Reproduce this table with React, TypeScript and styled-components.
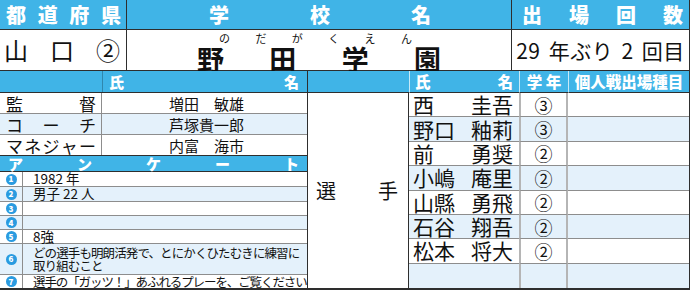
import React from "react";
import styled, { createGlobalStyle } from "styled-components";

const BLUE = "#40b4e7";
const PALE = "#e4f1fb";
const LINE = "#2e2e2e";
const SOFT = "#8d8d8d";

const GlobalStyle = createGlobalStyle`
  body {
    margin: 0;
    background: #fff;
    color: #111;
    font-family: "Noto Sans CJK JP", "Noto Sans", sans-serif;
  }
`;

const Board = styled.div`
  width: 690px;
  height: 290px;
  box-sizing: border-box;
  display: flex;
  flex-direction: column;
  border-bottom: 2px solid ${LINE};
  border-right: 1px solid ${LINE};
  overflow: hidden;
  line-height: 1;
`;

// top: prefecture / school / appearances
const TopGrid = styled.div`
  display: grid;
  grid-template-columns: 126px 385px 1fr;
  grid-template-rows: 30px 41px;
  flex: none;
`;

type PadProps = { $l?: number; $r?: number };

const HeadCell = styled.div<PadProps & { $first?: boolean }>`
  background: ${BLUE};
  color: #fff;
  font-weight: 900;
  font-size: 20px;
  display: flex;
  align-items: center;
  justify-content: space-between;
  padding: 0 ${(p) => p.$r ?? 6}px 0 ${(p) => p.$l ?? 6}px;
  border-left: ${(p) => (p.$first ? "none" : `1px solid ${LINE}`)};
  border-bottom: 1px solid ${LINE};
`;

const ValueCell = styled.div<PadProps & { $first?: boolean }>`
  background: #fff;
  display: flex;
  align-items: center;
  justify-content: space-between;
  padding: 0 ${(p) => p.$r ?? 6}px 0 ${(p) => p.$l ?? 6}px;
  border-left: ${(p) => (p.$first ? "none" : `1px solid ${LINE}`)};
  border-bottom: 1px solid ${LINE};
  font-size: 24px;
`;

const SchoolCell = styled.div`
  border-left: 1px solid ${LINE};
  border-bottom: 1px solid ${LINE};
  display: flex;
  flex-direction: column;
`;

const Furigana = styled.div`
  display: flex;
  justify-content: space-between;
  padding: 3px 99px 0 92px;
  font-size: 11px;
  height: 12px;
`;

const SchoolName = styled.div`
  display: flex;
  justify-content: space-between;
  padding: 1px 70px 0 70px;
  font-size: 27px;
  font-weight: 700;
`;

const Appear = styled.div`
  border-left: 1px solid ${LINE};
  border-bottom: 1px solid ${LINE};
  display: flex;
  align-items: center;
  justify-content: center;
  font-size: 21px;
  letter-spacing: 0.5px;
  word-spacing: 3px;
`;

// lower part
const Lower = styled.div`
  flex: 1;
  display: flex;
  min-height: 0;
`;

const LeftPanel = styled.div`
  width: 307px;
  flex: none;
  display: flex;
  flex-direction: column;
  border-right: 1px solid ${LINE};
`;

const StaffHead = styled.div`
  height: 22px;
  flex: none;
  display: grid;
  grid-template-columns: 102px 1fr;
  background: ${BLUE};
  color: #fff;
  font-weight: 900;
  font-size: 15px;
  border-bottom: 1px solid ${LINE};
  box-sizing: border-box;
`;

const HeadSplit = styled.div<PadProps & { $line?: boolean }>`
  display: flex;
  align-items: center;
  justify-content: space-between;
  padding: 0 ${(p) => p.$r ?? 8}px 0 ${(p) => p.$l ?? 8}px;
  border-left: ${(p) => (p.$line ? "1px solid rgba(0,0,0,0.25)" : "none")};
`;

const StaffRow = styled.div<{ $alt?: boolean }>`
  height: 21px;
  flex: none;
  display: grid;
  grid-template-columns: 102px 1fr;
  background: ${(p) => (p.$alt ? PALE : "#fff")};
  border-bottom: 1px solid ${SOFT};
  box-sizing: border-box;
  &:nth-child(4) {
    border-bottom-color: ${LINE};
  }
`;

const StaffLabel = styled.div`
  display: flex;
  align-items: center;
  justify-content: space-between;
  padding: 0 5px 0 6px;
  font-size: 17px;
  border-right: 1px solid ${SOFT};
`;

const StaffName = styled.div`
  display: flex;
  align-items: center;
  justify-content: center;
  font-size: 15px;
  padding-left: 4px;
`;

const SurveyHead = styled.div`
  height: 16px;
  flex: none;
  background: ${BLUE};
  color: #fff;
  font-weight: 900;
  font-size: 15px;
  display: flex;
  align-items: center;
  justify-content: space-between;
  padding: 0 8px 0 8px;
  border-bottom: 1px solid ${LINE};
  box-sizing: border-box;
`;

const SurveyRow = styled.div<{ $alt?: boolean; $h: number }>`
  height: ${(p) => p.$h}px;
  flex: none;
  display: grid;
  grid-template-columns: 23px 1fr;
  background: ${(p) => (p.$alt ? PALE : "#fff")};
  border-bottom: 1px solid ${SOFT};
  box-sizing: border-box;
  &:last-child {
    border-bottom: none;
    flex: 1 1 auto;
    min-height: 0;
  }
`;

const NumCell = styled.div`
  display: flex;
  align-items: center;
  justify-content: center;
  border-right: 1px solid ${SOFT};
`;

const Badge = styled.span`
  width: 11px;
  height: 11px;
  border-radius: 50%;
  background: #2a9be0;
  color: #fff;
  font-size: 8px;
  font-weight: 900;
  display: flex;
  align-items: center;
  justify-content: center;
`;

const Answer = styled.div<{ $squeeze: number; $size: number }>`
  display: flex;
  align-items: center;
  padding-left: 10px;
  font-size: ${(p) => p.$size}px;
  line-height: 13.5px;
  letter-spacing: ${(p) => p.$squeeze}px;
  white-space: pre-line;
`;

const RightPanel = styled.div`
  flex: 1;
  display: grid;
  grid-template-columns: 101px 110px 49px 1fr;
  grid-template-rows: 22px repeat(8, minmax(0, 1fr));
  min-height: 0;
`;

const RHead = styled.div<PadProps & { $line?: boolean; $center?: boolean }>`
  background: ${BLUE};
  color: #fff;
  font-weight: 900;
  font-size: 15.5px;
  display: flex;
  align-items: center;
  justify-content: ${(p) => (p.$center ? "center" : "space-between")};
  padding: 0 ${(p) => p.$r ?? 0}px 0 ${(p) => p.$l ?? 0}px;
  border-left: ${(p) => (p.$line ? "1px solid rgba(255,255,255,0.7)" : "none")};
  border-bottom: 1px solid ${LINE};
  white-space: nowrap;
`;

const PlayersLabel = styled.div`
  grid-row: 2 / span 8;
  grid-column: 1;
  display: flex;
  align-items: center;
  justify-content: space-between;
  padding: 0 10px 0 8px;
  font-size: 20px;
  border-right: 1px solid ${LINE};
  background: #fff;
`;

const PCell = styled.div<{ $alt?: boolean; $last?: boolean }>`
  background: ${(p) => (p.$alt ? PALE : "#fff")};
  border-bottom: ${(p) => (p.$last ? "none" : `1px solid ${SOFT}`)};
  display: flex;
  align-items: center;
`;

const NameCell = styled(PCell)`
  justify-content: space-between;
  padding: 0 6px 0 4px;
  font-size: 21px;
`;

const GradeCell = styled(PCell)`
  justify-content: center;
  font-size: 18px;
  border-left: 2px solid #b5b5b5;
  border-right: 2px solid #b5b5b5;
`;

const players = [
  ["西", "圭吾", "③"],
  ["野口", "釉莉", "③"],
  ["前", "勇奨", "②"],
  ["小嶋", "庵里", "②"],
  ["山縣", "勇飛", "②"],
  ["石谷", "翔吾", "②"],
  ["松本", "将大", "②"],
  ["", "", ""],
];

const staff = [
  [["監", "督"], "増田　敏雄"],
  [["コ", "ー", "チ"], "芦塚貴一郎"],
  [["マ", "ネ", "ジ", "ャ", "ー"], "内富　海市"],
] as const;

// text, row height, letter spacing, font size
const answers: [string, number, number, number][] = [
  ["1982 年", 15, 0, 13.5],
  ["男子 22 人", 15, 0, 13.5],
  ["", 14, 0, 13],
  ["", 14, 0, 13],
  ["8強", 14, 0, 13.5],
  ["どの選手も明朗活発で、とにかくひたむきに練習に\n取り組むこと", 31, -0.9, 12.5],
  ["選手の「ガッツ！」あふれるプレーを、ご覧ください", 14, -1.1, 12.5],
];

const spread = (s: string) => s.split("").map((c, i) => <span key={i}>{c}</span>);

export default function App() {
  return (
    <>
      <GlobalStyle />
      <Board>
        <TopGrid>
          <HeadCell $first $l={6} $r={5}>
            {spread("都道府県")}
          </HeadCell>
          <HeadCell $l={82} $r={80}>
            {spread("学校名")}
          </HeadCell>
          <HeadCell $l={10} $r={6}>
            {spread("出場回数")}
          </HeadCell>

          <ValueCell $first $l={4} $r={6}>
            {spread("山口②")}
          </ValueCell>
          <SchoolCell>
            <Furigana>{spread("のだがくえん")}</Furigana>
            <SchoolName>{spread("野田学園")}</SchoolName>
          </SchoolCell>
          <Appear>29 年ぶり 2 回目</Appear>
        </TopGrid>

        <Lower>
          <LeftPanel>
            <StaffHead>
              <HeadSplit />
              <HeadSplit $line $l={6} $r={8}>
                <span>氏</span>
                <span>名</span>
              </HeadSplit>
            </StaffHead>
            {staff.map(([label, name], i) => (
              <StaffRow key={i} $alt={i === 1}>
                <StaffLabel>
                  {label.map((c, j) => (
                    <span key={j}>{c}</span>
                  ))}
                </StaffLabel>
                <StaffName>{name}</StaffName>
              </StaffRow>
            ))}
            <SurveyHead>{spread("アンケート")}</SurveyHead>
            {answers.map(([text, h, sq, size], i) => (
              <SurveyRow key={i} $alt={i % 2 === 1} $h={h}>
                <NumCell>
                  <Badge>{i + 1}</Badge>
                </NumCell>
                <Answer $squeeze={sq} $size={size}>
                  {text}
                </Answer>
              </SurveyRow>
            ))}
          </LeftPanel>

          <RightPanel>
            <RHead />
            <RHead $line $l={5} $r={6}>
              <span>氏</span>
              <span>名</span>
            </RHead>
            <RHead $line $center>
              学 年
            </RHead>
            <RHead $line $center>
              個人戦出場種目
            </RHead>
            <PlayersLabel>
              <span>選</span>
              <span>手</span>
            </PlayersLabel>
            {players.map(([sei, mei, grade], i) => {
              const alt = i % 2 === 1;
              const last = i === players.length - 1;
              return (
                <React.Fragment key={i}>
                  <NameCell $alt={alt} $last={last}>
                    <span>{sei}</span>
                    <span>{mei}</span>
                  </NameCell>
                  <GradeCell $alt={alt} $last={last}>
                    {grade}
                  </GradeCell>
                  <PCell $alt={alt} $last={last} />
                </React.Fragment>
              );
            })}
          </RightPanel>
        </Lower>
      </Board>
    </>
  );
}
